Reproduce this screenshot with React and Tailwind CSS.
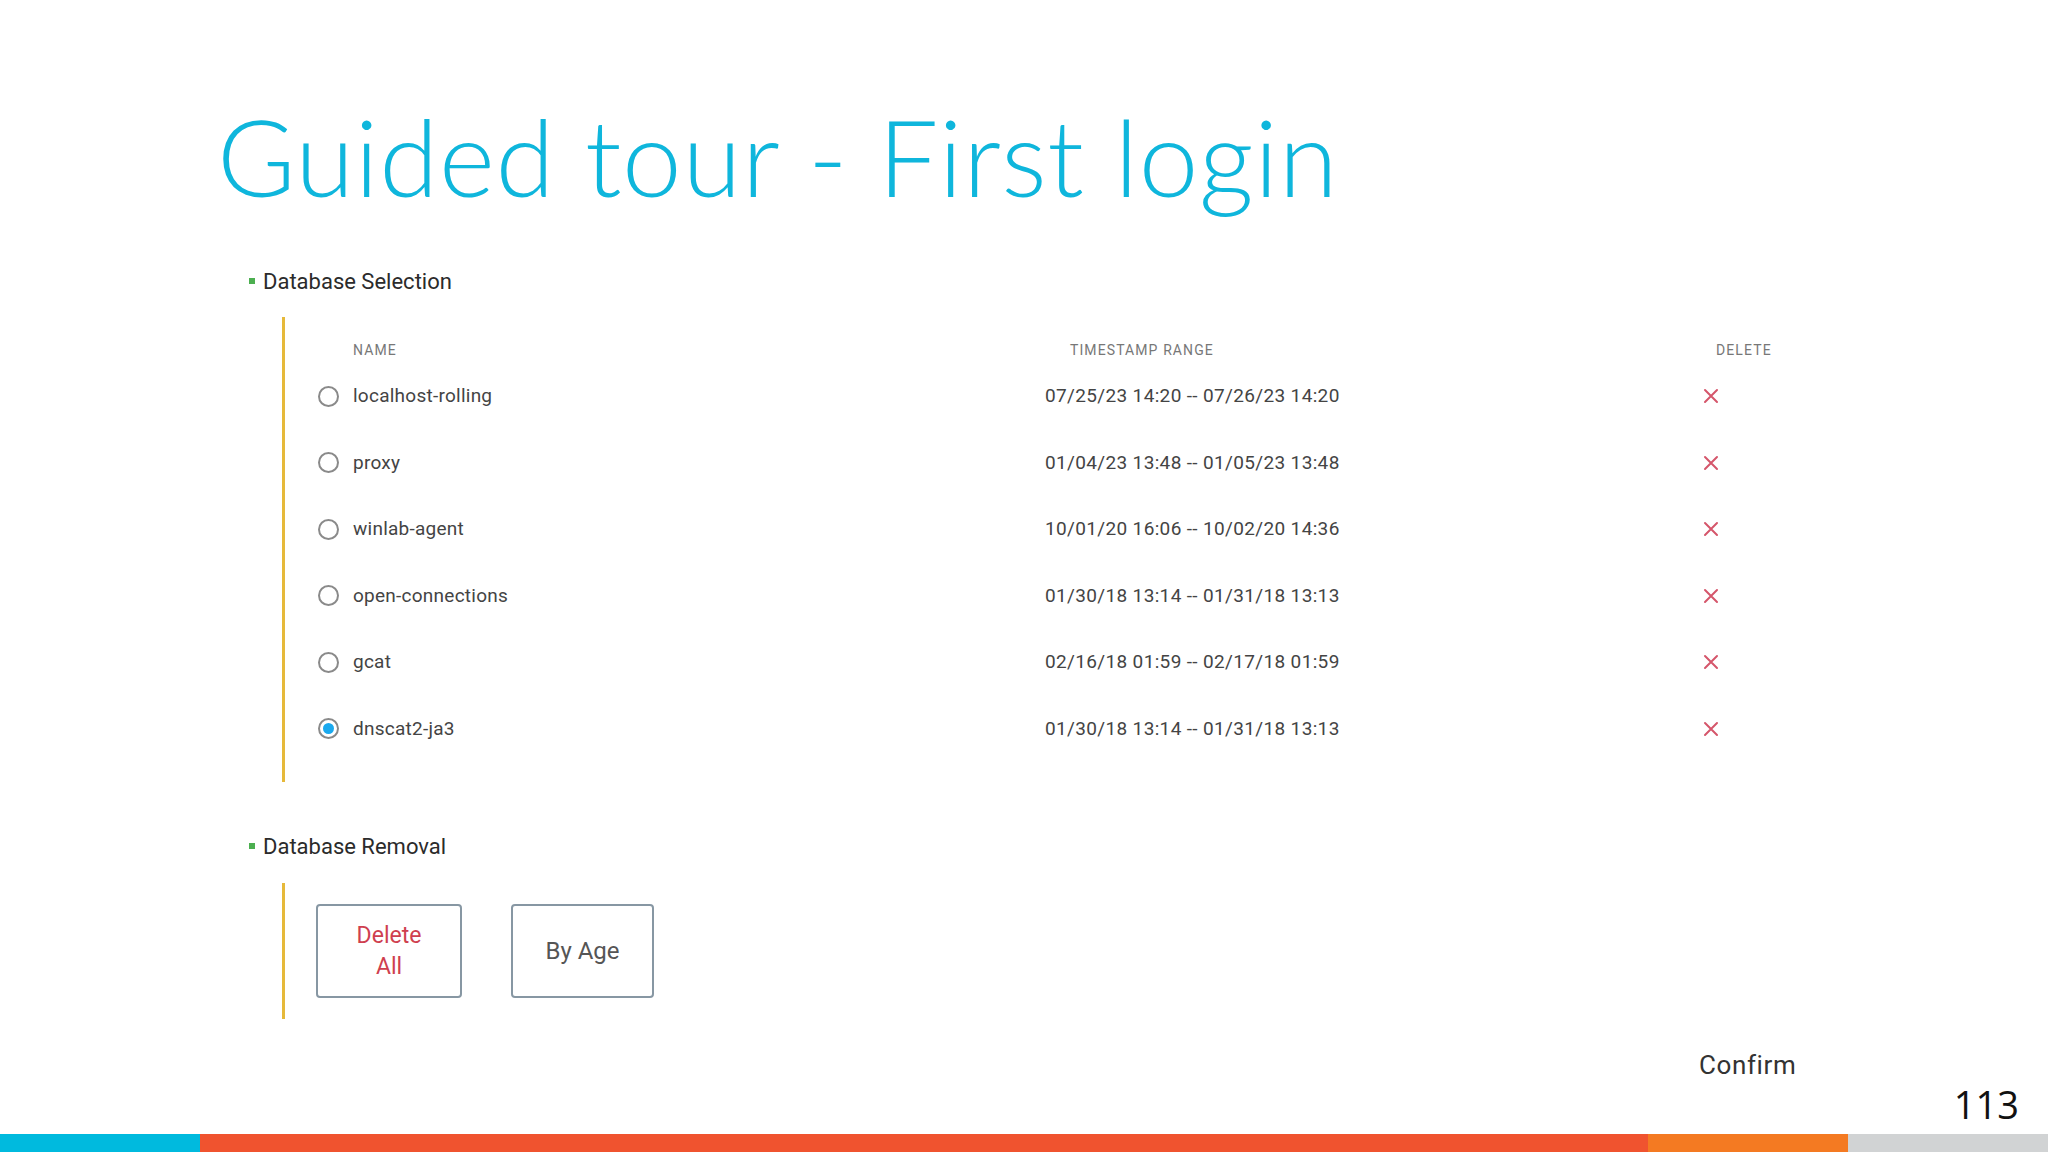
const rows = [
  { name: "localhost-rolling", range: "07/25/23 14:20 -- 07/26/23 14:20" },
  { name: "proxy", range: "01/04/23 13:48 -- 01/05/23 13:48" },
  { name: "winlab-agent", range: "10/01/20 16:06 -- 10/02/20 14:36" },
  { name: "open-connections", range: "01/30/18 13:14 -- 01/31/18 13:13" },
  { name: "gcat", range: "02/16/18 01:59 -- 02/17/18 01:59" },
  { name: "dnscat2-ja3", range: "01/30/18 13:14 -- 01/31/18 13:13", checked: true },
];

function Radio({ checked }) {
  return (
    <span className="w-[21px] h-[21px] rounded-full border-2 border-[#8a8a8a] bg-white flex items-center justify-center shrink-0">
      {checked && <span className="w-[11px] h-[11px] rounded-full bg-[#1aa9ee]" />}
    </span>
  );
}

function Cross() {
  return (
    <svg width="16" height="16" viewBox="0 0 16 16" className="shrink-0">
      <path d="M2 2 L14 14 M14 2 L2 14" stroke="#d5566b" strokeWidth="2" strokeLinecap="round" />
    </svg>
  );
}

function SectionHeading({ children }) {
  return (
    <div className="flex items-center gap-[8px] h-[30px] text-[22px] text-[#2b2b2b]">
      <span className="w-[6px] h-[6px] bg-[#4caf50]" />
      <span>{children}</span>
    </div>
  );
}

export default function App() {
  return (
    <div className="w-[2048px] h-[1152px] bg-white relative overflow-hidden flex flex-col font-['Roboto',sans-serif]">
      <h1 className="pl-[217px] pt-[102px] h-[266px] text-[107px] leading-none font-light text-[#0fb6dc] font-['Lato','Noto_Sans',sans-serif] tracking-[0.7px]">
        Guided tour - First login
      </h1>

      <div className="pl-[249px] flex flex-col">
        <SectionHeading>Database Selection</SectionHeading>

        <div className="mt-[21px] ml-[33px] border-l-[3px] border-[#e6b93a] py-[20px] pl-[33px] flex flex-col">
          <div className="flex h-[26px] items-center text-[14px] text-[#777] tracking-[1.1px] uppercase">
            <div className="w-[727px] pl-[35px]">Name</div>
            <div className="w-[658px] pl-[25px]">Timestamp Range</div>
            <div className="pl-[13px]">Delete</div>
          </div>
          {rows.map((r) => (
            <div key={r.name} className="flex h-[66.5px] items-center text-[19px] text-[#444]">
              <div className="w-[727px] flex items-center gap-[14px]">
                <Radio checked={r.checked} />
                <span className="tracking-[0.25px]">{r.name}</span>
              </div>
              <div className="w-[658px] tracking-[0.35px]">{r.range}</div>
              <Cross />
            </div>
          ))}
        </div>

        <div className="mt-[49px]">
          <SectionHeading>Database Removal</SectionHeading>
        </div>

        <div className="mt-[22px] ml-[33px] border-l-[3px] border-[#e6b93a] py-[21px] pl-[31px] flex gap-[49px]">
          <button className="w-[146px] h-[94px] border-2 border-[#8797a3] rounded-[4px] text-[23px] leading-[31px] text-[#cf3f4f] bg-white">
            Delete
            <br />
            All
          </button>
          <button className="w-[143px] h-[94px] border-2 border-[#8797a3] rounded-[4px] text-[24px] text-[#555] bg-white">
            By Age
          </button>
        </div>
      </div>

      <div className="mt-[31px] pl-[1699px] h-[30px] flex items-center text-[26px] tracking-[0.6px] text-[#333]">Confirm</div>

      <div className="absolute right-[29px] bottom-[29px] text-[38px] leading-none text-[#111] font-['Open_Sans',sans-serif]">113</div>

      <div className="mt-auto h-[18px] flex">
        <div className="w-[200px] bg-[#00bade]" />
        <div className="w-[1448px] bg-[#f0532f]" />
        <div className="w-[200px] bg-[#f47a22]" />
        <div className="flex-1 bg-[#d1d3d4]" />
      </div>
    </div>
  );
}
